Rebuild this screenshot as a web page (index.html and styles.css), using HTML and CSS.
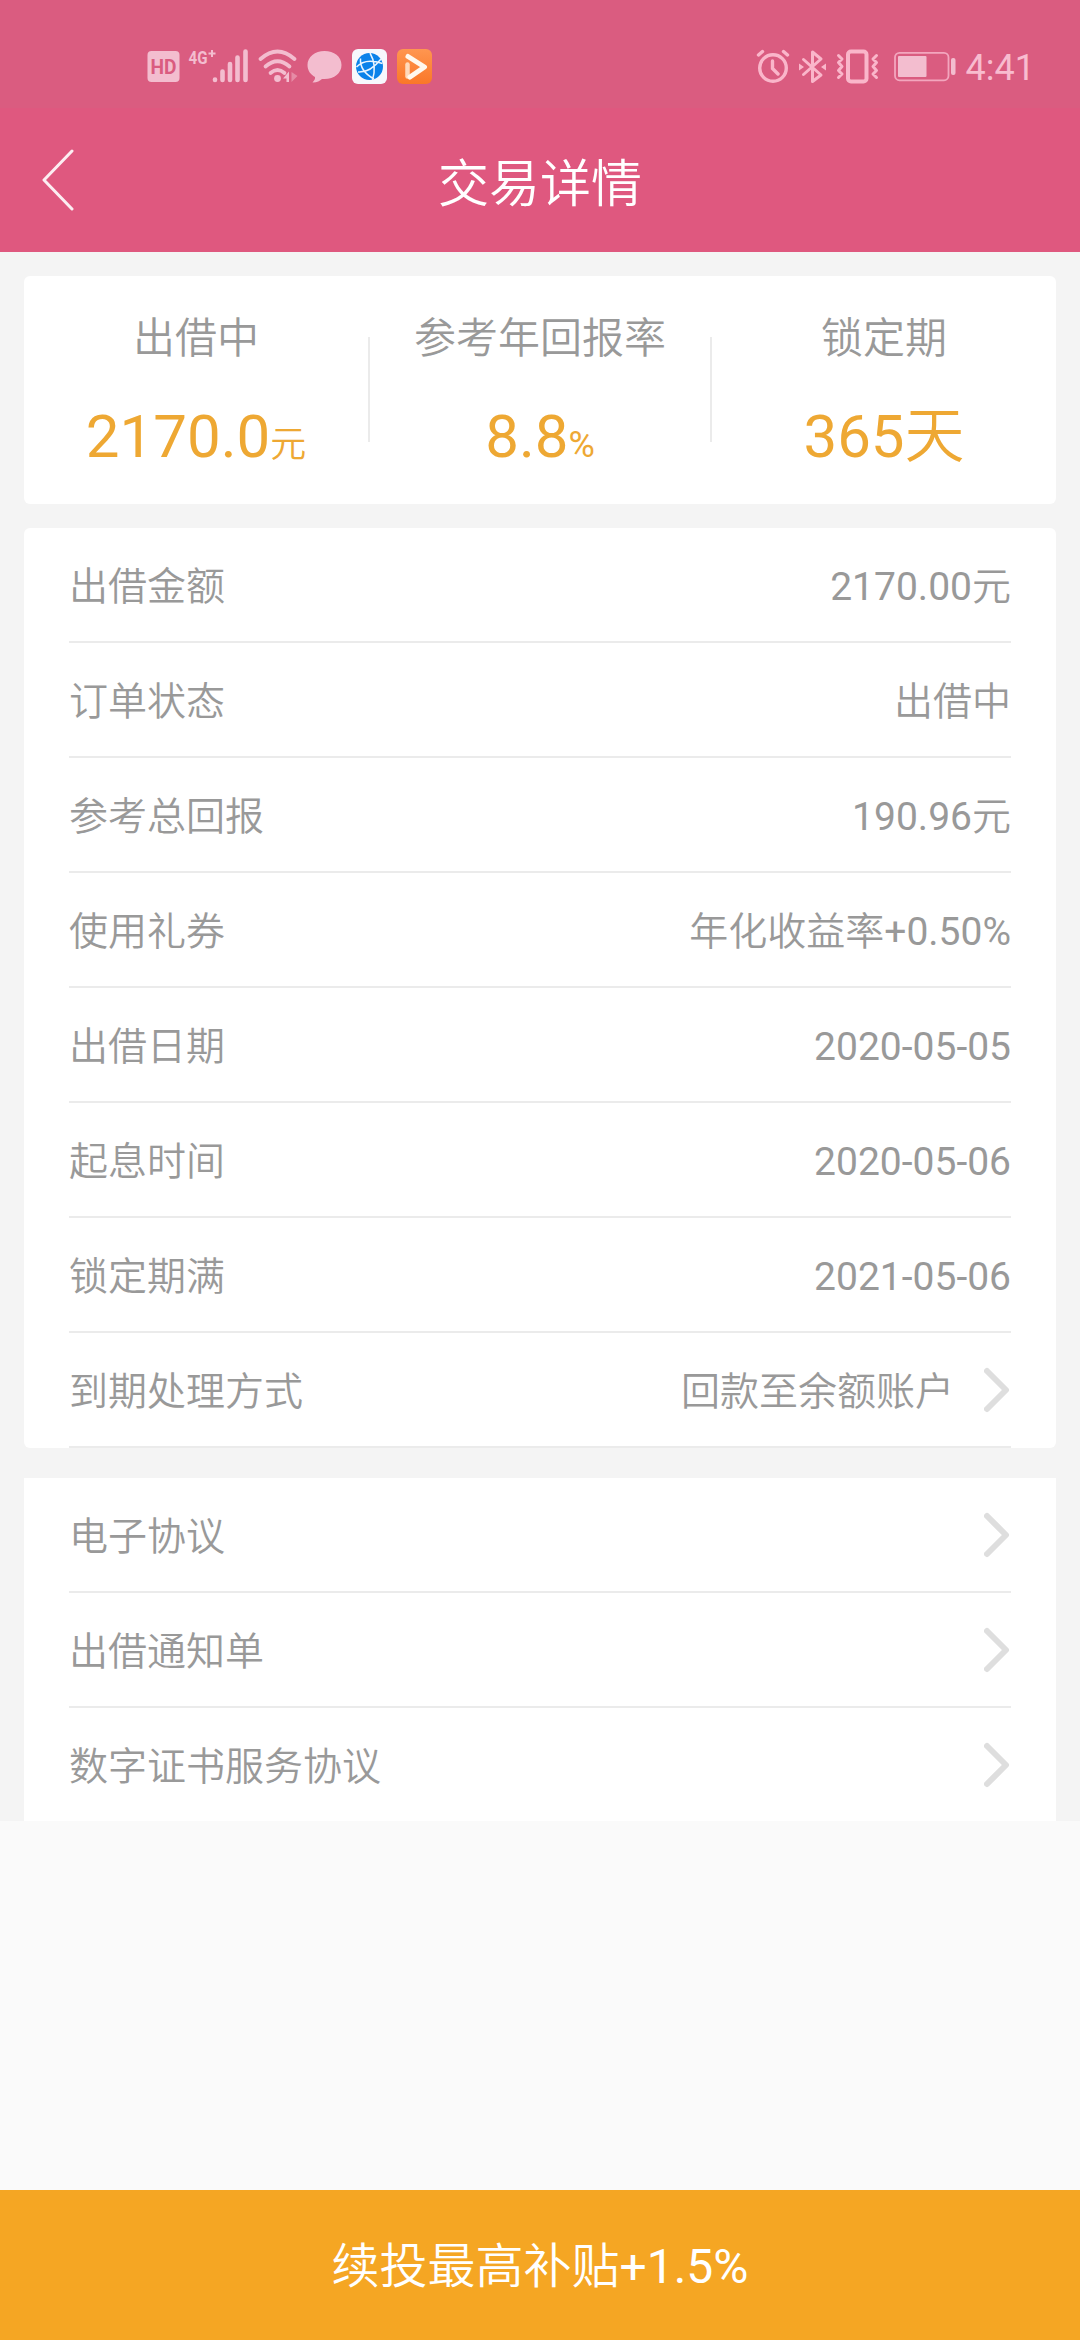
FILE: index.html
```html
<!DOCTYPE html>
<html lang="zh-CN">
  <head>
    <meta charset="UTF-8" />
    <meta name="viewport" content="width=device-width, initial-scale=1.0" />
    <title>交易详情</title>
    <link rel="stylesheet" href="styles.css">
  </head>
  <body>
    <svg class="defs" width="0" height="0">
      <symbol id="arrow" viewBox="0 0 27 46">
        <path d="M3 4L22 23L3 42" fill="none" stroke="#dedede" stroke-width="6" stroke-linecap="round" stroke-linejoin="round" />
      </symbol>
    </svg>

    <div class="status-bar">
      <div class="status-left">
        <svg class="icon-hd" width="33" height="38" viewBox="0 0 33 38">
          <rect x="0.5" y="3" width="32" height="31" rx="4" fill="#f3bdcf" />
          <text x="16.5" y="25.5" class="hd-text" textLength="26" lengthAdjust="spacingAndGlyphs">HD</text>
        </svg>
        <svg class="icon-signal" width="61" height="38" viewBox="0 0 61 38">
          <text x="0.5" y="16" class="net-text" textLength="19" lengthAdjust="spacingAndGlyphs">4G</text>
          <path d="M20.500 5.500h7M24 2v7" stroke="#f3bdcf" stroke-width="2" />
          <path d="M27 31.500v0.500M34.500 23.500v8.500M42 16v16M49.500 9.500v22.500M57.500 3.500v28.500" stroke="#f3bdcf" stroke-width="4.600" stroke-linecap="round" />
        </svg>
        <svg class="icon-wifi" width="40" height="38" viewBox="0 0 40 38">
          <g fill="none" stroke="#f3bdcf" stroke-width="3.700" stroke-linecap="round">
            <path d="M2.500 11Q19.500-4 36.500 11" />
            <path d="M7.500 18.500Q19.500 8 31.500 18.500" />
            <path d="M12.500 25Q19.500 19 26.500 25" />
          </g>
          <circle cx="19.500" cy="30.500" r="3.400" fill="#f3bdcf" />
          <path d="M25 30.500l6-7v10.500h-2.500v-3.500z" fill="#f3bdcf" />
          <path d="M33.500 24l6 4-6 6z" fill="#e68ba6" />
        </svg>
        <svg class="icon-chat" width="35" height="38" viewBox="0 0 35 38">
          <path d="M17.500 3C8 3 .5 9 .5 17c0 5.500 3 9.500 7.500 12 .3 2-.7 3.500-2.500 5.500 4 .2 7.500-1.500 9.500-3.500C26.500 32 34.500 25.500 34.500 17S27 3 17.500 3z" fill="#f3bdcf" />
        </svg>
        <svg class="icon-browser" width="35" height="38" viewBox="0 0 35 38">
          <rect y="1" width="35" height="35" rx="6" fill="#f7f7fc" />
          <circle cx="17.500" cy="18.500" r="13.500" fill="#0b82ea" />
          <path d="M18 5Q25 17 20.500 32M4.500 19Q13 9.500 30.500 15.500M6 24Q18 25 29 11M8.500 10.500Q7.500 23 22 31" fill="none" stroke="#eaf5ff" stroke-width="1.500" />
        </svg>
        <svg class="icon-video" width="35" height="38" viewBox="0 0 35 38">
          <defs>
            <linearGradient id="videoBg" x1="0" y1="0" x2="0" y2="1">
              <stop offset="0" stop-color="#ff9650" />
              <stop offset="1" stop-color="#fa7728" />
            </linearGradient>
          </defs>
          <rect y="1" width="35" height="35" rx="6" fill="url(#videoBg)" />
          <path d="M10.500 16.500v12" stroke="#ffd9bb" stroke-width="4.500" stroke-linecap="round" />
          <path d="M11 8.500L27.500 19L13 29" fill="none" stroke="#fff8ee" stroke-width="5" stroke-linecap="round" stroke-linejoin="round" />
        </svg>
      </div>
      <div class="status-right">
        <svg class="icon-alarm" width="34" height="38" viewBox="0 0 34 38">
          <g fill="none" stroke="#fab6ca" stroke-width="3.400" stroke-linecap="round">
            <circle cx="17" cy="20" r="13.300" />
            <path d="M16.500 13v7.500l5.500 5.500M2.500 7l4-3.500M31.500 7l-4-3.500" />
          </g>
        </svg>
        <svg class="icon-bluetooth" width="28" height="38" viewBox="0 0 28 38">
          <path d="M4.500 11.500L22 27L13.500 33.500V4L22 11L4.500 26.500" fill="none" stroke="#fab6ca" stroke-width="3" stroke-linejoin="round" stroke-linecap="round" />
          <path d="M0 15.500l5 3.500-5 3.500zM27 15.500l-5 3.500 5 3.500z" fill="#fab6ca" />
        </svg>
        <svg class="icon-vibrate" width="43" height="38" viewBox="0 0 43 38">
          <g fill="none" stroke="#fab6ca" stroke-linejoin="round" stroke-linecap="round">
            <rect x="12" y="3.500" width="18.500" height="30" rx="3" stroke-width="4" />
            <path d="M2.500 7.500L6 11L2.500 14.500L6 18.500L2.500 22.500L6 26L2.500 29.500M40.500 7.500L37 11L40.500 14.500L37 18.500L40.500 22.500L37 26L40.500 29.500" stroke-width="3" />
          </g>
        </svg>
        <svg class="icon-battery" width="62" height="38" viewBox="0 0 62 38">
          <rect x="1" y="4.800" width="53.500" height="27.500" rx="4.500" fill="none" stroke="#f3a6be" stroke-width="1.800" />
          <rect x="4" y="8" width="28.500" height="21" rx="1" fill="#f3bdcf" />
          <rect x="57" y="10" width="4.500" height="17" rx="2" fill="#f3bdcf" />
        </svg>
        <span class="clock">4:41</span>
      </div>
    </div>

    <div class="nav-bar">
      <svg class="back" width="34" height="62" viewBox="0 0 34 62">
        <path d="M31 2L3 31L31 60" fill="none" stroke="#fff" stroke-opacity="0.9" stroke-width="3" stroke-linecap="round" stroke-linejoin="round" />
      </svg>
      <h1 class="nav-title">交易详情</h1>
    </div>

    <div class="content">
      <div class="card summary">
        <div class="summary-item">
          <span class="summary-label">出借中</span>
          <span class="summary-value"><b>2170.0</b><small>元</small></span>
        </div>
        <div class="divider"></div>
        <div class="summary-item">
          <span class="summary-label">参考年回报率</span>
          <span class="summary-value"><b>8.8</b><small><b>%</b></small></span>
        </div>
        <div class="divider"></div>
        <div class="summary-item">
          <span class="summary-label">锁定期</span>
          <span class="summary-value"><b>365</b>天</span>
        </div>
      </div>

      <div class="card list">
        <div class="row"><span>出借金额</span><span class="value"><b>2170.00</b>元</span></div>
        <div class="row"><span>订单状态</span><span class="value">出借中</span></div>
        <div class="row"><span>参考总回报</span><span class="value"><b>190.96</b>元</span></div>
        <div class="row"><span>使用礼券</span><span class="value">年化收益率<b>+0.50%</b></span></div>
        <div class="row"><span>出借日期</span><span class="value"><b>2020-05-05</b></span></div>
        <div class="row"><span>起息时间</span><span class="value"><b>2020-05-06</b></span></div>
        <div class="row"><span>锁定期满</span><span class="value"><b>2021-05-06</b></span></div>
        <div class="row">
          <span>到期处理方式</span>
          <span class="value">回款至余额账户</span>
          <svg class="arrow"><use href="#arrow" /></svg>
        </div>
      </div>

      <div class="card list links">
        <div class="row"><span>电子协议</span><svg class="arrow"><use href="#arrow" /></svg></div>
        <div class="row"><span>出借通知单</span><svg class="arrow"><use href="#arrow" /></svg></div>
        <div class="row"><span>数字证书服务协议</span><svg class="arrow"><use href="#arrow" /></svg></div>
      </div>
    </div>

    <div class="bottom-btn">续投最高补贴<b>+1.5%</b></div>
  </body>
</html>
```
FILE: styles.css
```css
* {
  box-sizing: border-box;
}
body {
  margin: 0;
  height: 2340px;
  display: flex;
  flex-direction: column;
  background-color: #fafafa;
  color: #999;
  font-family: Roboto, "Noto Sans CJK SC", sans-serif;
  font-weight: 350;
  overflow: hidden;
}
/* digits are regular, chinese text is lighter */
b {
  font-weight: 400;
}
.defs {
  position: absolute;
}

/* status bar */
.status-bar {
  height: 108px;
  padding: 48px 45px 0 147px;
  display: flex;
  justify-content: space-between;
  background-color: #da5c80;
}
.status-left,
.status-right {
  display: flex;
  height: 38px;
}
.icon-signal {
  margin-left: 8px;
  overflow: visible;
}
.icon-wifi {
  margin-left: 9px;
}
.icon-chat {
  margin-left: 9px;
}
.icon-browser,
.icon-video {
  margin-left: 10px;
}
.hd-text {
  font: bold 20px "Roboto", sans-serif;
  fill: #da5c80;
  text-anchor: middle;
}
.net-text {
  font: bold 19px "Roboto", sans-serif;
  fill: #f3bdcf;
}
.icon-bluetooth {
  margin-left: 9px;
}
.icon-vibrate {
  margin-left: 9px;
}
.icon-battery {
  margin-left: 15px;
}
.clock {
  margin-left: 10px;
  font-size: 36px;
  font-weight: 400;
  line-height: 40px;
  color: #f8bccf;
}

/* title */
.nav-bar {
  height: 144px;
  display: grid;
  grid-template-columns: 140px 1fr 140px;
  align-items: center;
  background-color: #df587f;
}
.back {
  margin-left: 41px;
}
.nav-title {
  margin: 0;
  padding-top: 9px;
  font-size: 51px;
  font-weight: 350;
  line-height: 60px;
  text-align: center;
  color: #fff;
}

.content {
  height: 1569px;
  padding: 24px 24px 0;
  background-color: #f4f4f4;
}
.card {
  background-color: #fff;
  border-radius: 6px;
}

/* summary */
.summary {
  height: 228px;
  display: grid;
  grid-template-columns: 1fr 2px 340px 2px 1fr;
}
.summary-item {
  display: flex;
  flex-direction: column;
  align-items: center;
  padding-top: 38px;
}
.summary-label {
  font-size: 42px;
  line-height: 50px;
}
.summary-value {
  margin-top: 38px;
  font-size: 60px;
  line-height: 70px;
  color: #eea833;
}
.summary-value small {
  font-size: 36px;
}
.divider {
  height: 105px;
  margin-top: 61px;
  background-color: #ebebeb;
}

/* rows */
.list {
  margin-top: 24px;
  padding: 0 45px;
}
.row {
  height: 115px;
  display: flex;
  align-items: center;
  border-bottom: 2px solid #ebebeb;
  font-size: 39px;
  line-height: 46px;
}
.row span {
  padding-top: 5px;
}
.value {
  margin-left: auto;
}
.arrow {
  width: 27px;
  height: 46px;
  margin-left: 30px;
}
.links {
  margin-top: 30px;
  border-radius: 0;
}
.links .arrow {
  margin-left: auto;
}
.links .row:last-child {
  height: 113px;
  border-bottom: none;
}

.bottom-btn {
  height: 150px;
  margin-top: auto;
  padding-top: 2px;
  font-size: 48px;
  line-height: 150px;
  text-align: center;
  background-color: #f5a623;
  color: #fff;
}
```
